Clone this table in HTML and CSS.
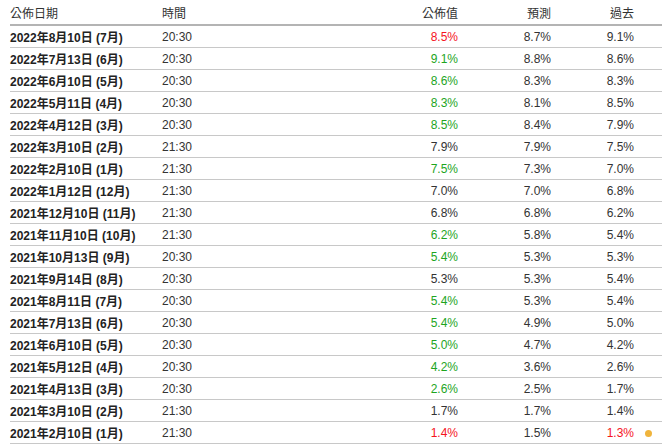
FILE: index.html
```html
<!DOCTYPE html>
<html lang="zh-Hant">
<head>
<meta charset="utf-8">
<title>公佈日期</title>
<link rel="stylesheet" href="styles.css">
</head>
<body>
<table class="tbl">
  <colgroup>
    <col class="c-date"><col class="c-time"><col class="c-act"><col class="c-fc"><col class="c-prev"><col class="c-dot">
  </colgroup>
  <thead>
    <tr><th class="l">公佈日期</th><th class="l">時間</th><th class="r">公佈值</th><th class="r">預測</th><th class="r">過去</th><th></th></tr>
  </thead>
  <tbody>
    <tr><td class="d">2022年8月10日 (7月)</td><td>20:30</td><td class="r red">8.5%</td><td class="r">8.7%</td><td class="r">9.1%</td><td></td></tr>
    <tr><td class="d">2022年7月13日 (6月)</td><td>20:30</td><td class="r grn">9.1%</td><td class="r">8.8%</td><td class="r">8.6%</td><td></td></tr>
    <tr><td class="d">2022年6月10日 (5月)</td><td>20:30</td><td class="r grn">8.6%</td><td class="r">8.3%</td><td class="r">8.3%</td><td></td></tr>
    <tr><td class="d">2022年5月11日 (4月)</td><td>20:30</td><td class="r grn">8.3%</td><td class="r">8.1%</td><td class="r">8.5%</td><td></td></tr>
    <tr><td class="d">2022年4月12日 (3月)</td><td>20:30</td><td class="r grn">8.5%</td><td class="r">8.4%</td><td class="r">7.9%</td><td></td></tr>
    <tr><td class="d">2022年3月10日 (2月)</td><td>21:30</td><td class="r">7.9%</td><td class="r">7.9%</td><td class="r">7.5%</td><td></td></tr>
    <tr><td class="d">2022年2月10日 (1月)</td><td>21:30</td><td class="r grn">7.5%</td><td class="r">7.3%</td><td class="r">7.0%</td><td></td></tr>
    <tr><td class="d">2022年1月12日 (12月)</td><td>21:30</td><td class="r">7.0%</td><td class="r">7.0%</td><td class="r">6.8%</td><td></td></tr>
    <tr><td class="d">2021年12月10日 (11月)</td><td>21:30</td><td class="r">6.8%</td><td class="r">6.8%</td><td class="r">6.2%</td><td></td></tr>
    <tr><td class="d">2021年11月10日 (10月)</td><td>21:30</td><td class="r grn">6.2%</td><td class="r">5.8%</td><td class="r">5.4%</td><td></td></tr>
    <tr><td class="d">2021年10月13日 (9月)</td><td>20:30</td><td class="r grn">5.4%</td><td class="r">5.3%</td><td class="r">5.3%</td><td></td></tr>
    <tr><td class="d">2021年9月14日 (8月)</td><td>20:30</td><td class="r">5.3%</td><td class="r">5.3%</td><td class="r">5.4%</td><td></td></tr>
    <tr><td class="d">2021年8月11日 (7月)</td><td>20:30</td><td class="r grn">5.4%</td><td class="r">5.3%</td><td class="r">5.4%</td><td></td></tr>
    <tr><td class="d">2021年7月13日 (6月)</td><td>20:30</td><td class="r grn">5.4%</td><td class="r">4.9%</td><td class="r">5.0%</td><td></td></tr>
    <tr><td class="d">2021年6月10日 (5月)</td><td>20:30</td><td class="r grn">5.0%</td><td class="r">4.7%</td><td class="r">4.2%</td><td></td></tr>
    <tr><td class="d">2021年5月12日 (4月)</td><td>20:30</td><td class="r grn">4.2%</td><td class="r">3.6%</td><td class="r">2.6%</td><td></td></tr>
    <tr><td class="d">2021年4月13日 (3月)</td><td>20:30</td><td class="r grn">2.6%</td><td class="r">2.5%</td><td class="r">1.7%</td><td></td></tr>
    <tr><td class="d">2021年3月10日 (2月)</td><td>21:30</td><td class="r">1.7%</td><td class="r">1.7%</td><td class="r">1.4%</td><td></td></tr>
    <tr><td class="d">2021年2月10日 (1月)</td><td>21:30</td><td class="r red">1.4%</td><td class="r">1.5%</td><td class="r red">1.3%</td><td class="dotcell"><span class="dot"></span></td></tr>
  </tbody>
</table>
</body>
</html>
```
FILE: styles.css
```css
html, body {
  margin: 0;
  padding: 0;
  background: #ffffff;
}
body {
  font-family: "Liberation Sans", Arial, "Noto Sans CJK TC", sans-serif;
  font-size: 12px;
  color: #333333;
}
.tbl {
  margin-left: 10px;
  width: 652px;
  border-collapse: collapse;
  table-layout: fixed;
}
.c-date { width: 152px; }
.c-time { width: 208px; }
.c-act { width: 88px; }
.c-fc { width: 93px; }
.c-prev { width: 83px; }
.c-dot { width: 28px; }
th {
  height: 24px;
  padding: 0;
  font-weight: normal;
  color: #333333;
  border-bottom: 2px solid #b4b4b4;
  vertical-align: middle;
}
td {
  height: 21px;
  padding: 0;
  border-bottom: 1px solid #c8c8c8;
  vertical-align: middle;
  white-space: nowrap;
  color: #333333;
}
.l { text-align: left; }
.r { text-align: right; }
.d {
  font-weight: bold;
  color: #222222;
}
.red { color: #f5141e; }
.grn { color: #1ea51e; }
.dotcell { text-align: center; }
.dot {
  display: inline-block;
  width: 7px;
  height: 7px;
  border-radius: 50%;
  background: #f0b43c;
  vertical-align: middle;
  margin-left: 0px;
}
```
